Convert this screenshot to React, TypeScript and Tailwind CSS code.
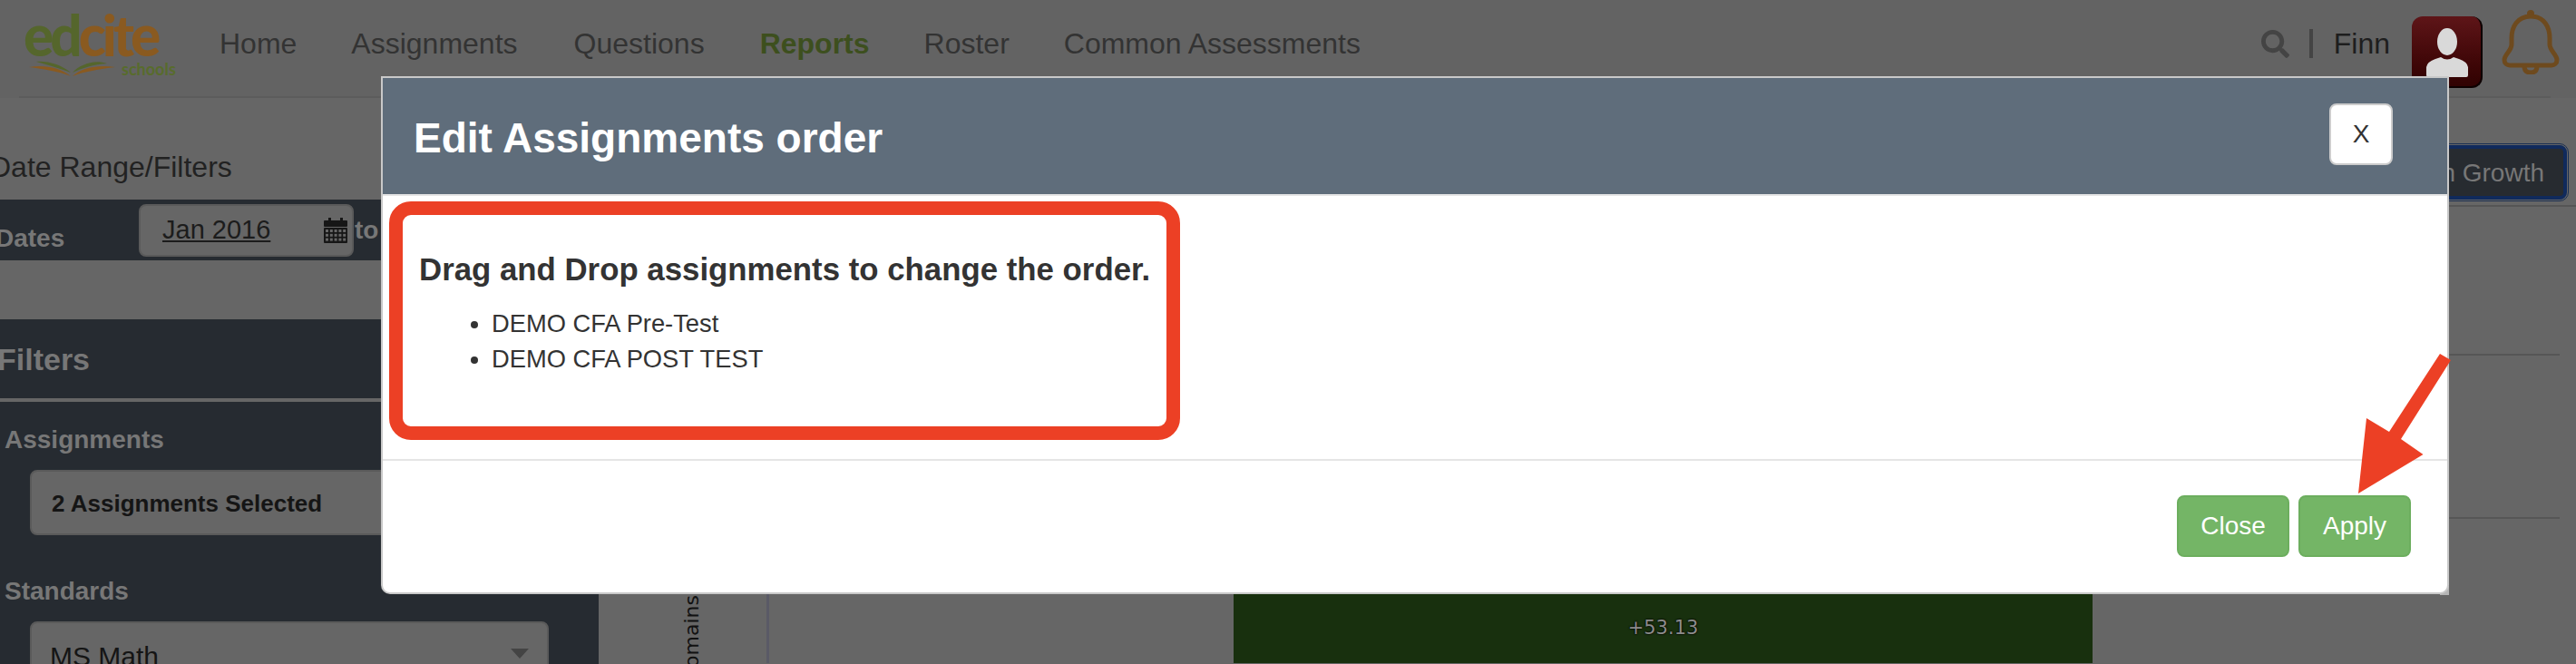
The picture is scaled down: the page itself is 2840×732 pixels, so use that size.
import { FaSearch } from 'react-icons/fa';

const navItems = [
  { label: 'Home', className: 'ml-[40px]' },
  { label: 'Assignments', className: 'ml-[60px]' },
  { label: 'Questions', className: 'ml-[62px]' },
  { label: 'Reports', className: 'ml-[61px] font-bold text-[#3d4f1e]' },
  { label: 'Roster', className: 'ml-[60px]' },
  { label: 'Common Assessments', className: 'ml-[60px]' },
];

function Logo() {
  return (
    <div className="relative w-[176px] h-[72px] ml-[26px] shrink-0 -mt-[12px]">
      <div className="text-[62px] leading-[52px] font-black tracking-[-4px] font-['Lato',sans-serif] text-[#8a5a20]">
        <span className="text-[#55662c]">ed</span>cite
      </div>
      <div className="absolute left-[108px] top-[54px] text-[18px] leading-[20px] font-bold text-[#586c2c] font-['Lato',sans-serif]">
        schools
      </div>
      <svg className="absolute left-[4px] top-[53px]" width="100" height="20" viewBox="0 0 100 20">
        <path d="M2 9 C18 6 36 9 48 19 C36 14 18 11 2 9Z" fill="#8a5a20" />
        <path d="M10 3 C24 2 38 7 48 15 C38 11 24 7 10 3Z" fill="#55662c" />
        <path d="M97 9 C80 6 60 9 50 19 C62 14 80 11 97 9Z" fill="#8a5a20" />
        <path d="M88 5 C74 0 58 6 50 15 C60 10 74 6 88 5Z" fill="#55662c" />
      </svg>
    </div>
  );
}

function CalendarIcon() {
  return (
    <svg width="26" height="28" viewBox="0 0 26 28" className="shrink-0">
      <rect x="5" y="0" width="3" height="5" fill="#161616" />
      <rect x="18" y="0" width="3" height="5" fill="#161616" />
      <rect x="0" y="3" width="26" height="7" rx="1" fill="#161616" />
      <rect x="0" y="11" width="26" height="17" rx="1" fill="#161616" />
      {[0, 1, 2].map((row) =>
        [0, 1, 2, 3, 4].map((col) => (
          <rect key={`${row}-${col}`} x={2 + col * 4.8} y={13 + row * 4.8} width="3" height="3" fill="#666" />
        ))
      )}
    </svg>
  );
}

function Avatar() {
  return (
    <div className="relative w-[78px] h-[79px] rounded-[12px] overflow-hidden bg-gradient-to-b from-[#5e1518] to-[#300202] border-r-2 border-b-2 border-[#0d0000] shrink-0">
      <svg className="absolute inset-0" width="78" height="79" viewBox="0 0 78 79">
        <ellipse cx="39" cy="28" rx="11" ry="15" fill="#d9d9d9" />
        <path d="M16 65 V56 Q17 50 26 47 L32 45 Q39 50 46 45 L52 47 Q61 50 62 56 V65 Q62 67 60 67 H18 Q16 67 16 65Z" fill="#d9d9d9" />
      </svg>
    </div>
  );
}

function Bell() {
  return (
    <svg width="64" height="72" viewBox="0 0 64 72" fill="none" stroke="#6e4a1e" strokeWidth="5" className="shrink-0">
      <circle cx="32" cy="5" r="3" fill="#6e4a1e" strokeWidth="2" />
      <path d="M32 8 C17 8 11 20 11 32 V39 C11 46 3 50 3 56 C3 60 6 62 9 62 H55 C58 62 61 60 61 56 C61 50 53 46 53 39 V32 C53 20 47 8 32 8Z" />
      <path d="M25 63 C25 68 28 70 32 70 C36 70 39 68 39 63" />
    </svg>
  );
}

function TopBar() {
  return (
    <header className="h-[108px] flex items-center bg-[#636363] relative">
      <Logo />
      <nav className="flex text-[32px] leading-[40px] text-[#333] -mt-[12px]">
        {navItems.map((item) => (
          <span key={item.label} className={item.className}>
            {item.label}
          </span>
        ))}
      </nav>
      <div className="ml-auto flex items-center pr-[18px] -mt-[12px]">
        <FaSearch className="text-[31px] text-[#444]" />
        <div className="w-[4px] h-[32px] bg-[#444] ml-[22px]" />
        <span className="ml-[23px] text-[32px] leading-[40px] text-[#1e1e1e]">Finn</span>
        <div className="ml-[24px] mt-[18px]">
          <Avatar />
        </div>
        <div className="ml-[21px] -mt-[4px]">
          <Bell />
        </div>
      </div>
      <div className="absolute left-[21px] right-[28px] bottom-0 h-[2px] bg-[#5c5c5c]" />
    </header>
  );
}

function Sidebar() {
  return (
    <aside className="w-[660px] shrink-0">
      <div className="h-[112px] flex items-end pb-[16px] -ml-[11px] text-[32px] leading-[40px] text-[#222]">
        Date Range/Filters
      </div>
      <div className="h-[67px] bg-[#262b31] flex items-center">
        <span className="text-[28px] font-bold text-[#777] w-[158px] -ml-[5px] mt-[18px] shrink-0">Dates</span>
        <div className="w-[237px] h-[58px] bg-[#666] border-2 border-[#5a5a5a] rounded-[8px] flex items-center pl-[24px] pr-[5px] justify-between shrink-0">
          <span className="text-[29px] text-[#1c1c1c] underline">Jan 2016</span>
          <CalendarIcon />
        </div>
        <span className="ml-[1px] text-[28px] font-bold text-[#777]">to</span>
      </div>
      <div className="mt-[65px] h-[380px] bg-[#262b31]">
        <div className="h-[91px] border-b-4 border-[#666] pt-[24px] -ml-[3px] text-[34px] leading-[40px] font-bold text-[#777]">
          Filters
        </div>
        <div className="pl-[5px] mt-[24px] text-[28px] leading-[36px] font-bold text-[#777]">Assignments</div>
        <div className="ml-[33px] w-[572px] h-[72px] mt-[15px] bg-[#666] border-2 border-[#5a5a5a] rounded-[8px] flex items-center pl-[22px] pt-[2px] text-[26px] font-bold text-[#151515]">
          2 Assignments Selected
        </div>
        <div className="pl-[5px] mt-[44px] text-[28px] leading-[36px] font-bold text-[#777]">Standards</div>
        <div className="ml-[33px] w-[572px] h-[72px] mt-[15px] bg-[#666] border-2 border-[#5a5a5a] rounded-[8px] flex items-start pl-[20px] pr-[20px] pt-[14px] justify-between text-[30px] text-[#151515]">
          <span>MS Math</span>
          <span className="mt-[14px] border-x-[10px] border-t-[11px] border-x-transparent border-t-[#444]" />
        </div>
      </div>
    </aside>
  );
}

function ChartArea() {
  return (
    <main className="flex-1 min-w-0 relative">
      <div className="pt-[52px] flex justify-end pr-[10px]">
        <div className="w-[300px] h-[60px] bg-[#272b30] border-[4px] border-[#102a5c] outline-1 outline-offset-1 outline-[#1a2f52] rounded-[8px] flex items-center justify-end pr-[21px] pt-[1px] text-[28px] text-[#777] whitespace-nowrap">
          Show Domain Growth
        </div>
      </div>
      <div className="mt-[6px] h-[2px] bg-[#555]" />
      <div className="mt-[162px] mr-[18px] h-[2px] bg-[#565656]" />
      <div className="mt-[178px] mr-[18px] h-[2px] bg-[#565656]" />
      <div className="flex mt-[82px]">
        <div className="w-[188px] shrink-0 relative border-r-[3px] border-[#5a5a66] h-[77px]">
          <span className="absolute left-[89px] top-[2px] [writing-mode:vertical-rl] rotate-180 text-[22px] leading-[28px] text-[#111] font-['DejaVu_Sans',sans-serif]">
            Domains
          </span>
        </div>
        <div className="ml-[512px] w-[947px] h-[77px] bg-[#18300e] flex items-center justify-center pb-[2px] text-[21px] leading-[24px] text-[#8c8c8c] font-['DejaVu_Sans',sans-serif] [text-shadow:0_0_2px_#000,0_0_2px_#000]">
          +53.13
        </div>
      </div>
    </main>
  );
}

function Arrow() {
  return (
    <svg className="absolute left-[2590px] top-[385px]" width="120" height="165" viewBox="0 0 120 165">
      <polygon
        points="100,5 112,12 57,99 81.5,116 10,159 19,76 44,91"
        fill="#ec4025"
      />
    </svg>
  );
}

function Modal() {
  return (
    <div className="absolute left-[420px] top-[84px] w-[2280px] h-[571px] bg-white border-2 border-[#c9c9c9] rounded-b-[10px] font-['Liberation_Sans',sans-serif]">
      <div className="h-[130px] bg-[#5f6d7b] border-b-2 border-[#e5e5e5] flex items-center justify-between pl-[34px] pr-[60px]">
        <h2 className="text-[46px] leading-[56px] font-bold text-white pt-[4px]">Edit Assignments order</h2>
        <button className="w-[70px] h-[68px] -mt-[4px] bg-white border-2 border-[#ccc] rounded-[8px] text-[28px] text-[#333]">
          X
        </button>
      </div>
      <div className="h-[292px] pt-[6px] pl-[7px] border-b-2 border-[#e5e5e5]">
        <div className="w-[872px] h-[263px] border-[15px] border-[#ec4025] rounded-[24px] pl-[18px] pt-[40px] text-[#333]">
          <h3 className="text-[34.8px] leading-[40px] font-bold whitespace-nowrap">Drag and Drop assignments to change the order.</h3>
          <ul className="list-disc mt-[20px] pl-[80px] text-[27.3px] leading-[39px]">
            <li>DEMO CFA Pre-Test</li>
            <li>DEMO CFA POST TEST</li>
          </ul>
        </div>
      </div>
      <div className="flex justify-end gap-[10px] pt-[38px] pr-[40px]">
        <button className="w-[124px] h-[68px] bg-[#74b566] border-2 border-[#6cae5e] rounded-[8px] text-[28px] text-white">Close</button>
        <button className="w-[124px] h-[68px] bg-[#74b566] border-2 border-[#6cae5e] rounded-[8px] text-[28px] text-white">Apply</button>
      </div>
    </div>
  );
}

export default function App() {
  return (
    <div className="relative w-[2840px] h-[732px] overflow-hidden bg-[#666] font-['Liberation_Sans',sans-serif]">
      <TopBar />
      <div className="flex">
        <Sidebar />
        <ChartArea />
      </div>
      {/* light corner that shows behind the modal's rounded edge */}
      <div className="absolute left-[2690px] top-[646px] w-[10px] h-[10px] bg-[#b5b5b5]" />
      <Modal />
      <Arrow />
    </div>
  );
}
